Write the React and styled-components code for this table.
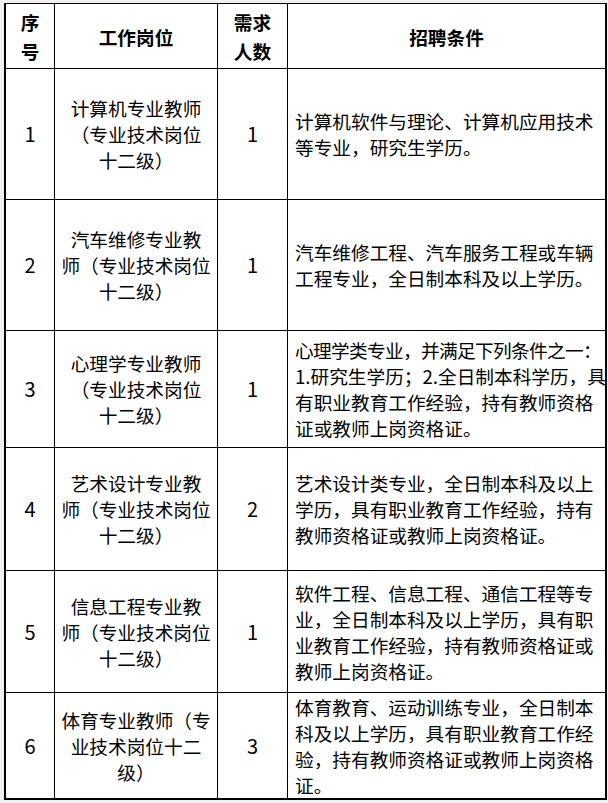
import React from "react";
import styled, { createGlobalStyle } from "styled-components";

const GlobalStyle = createGlobalStyle`
  html, body {
    margin: 0;
    padding: 0;
    background: #f0f0f0;
  }
  body {
    font-family: "Noto Sans CJK SC", "Noto Sans", sans-serif;
    color: #000;
  }
`;

const Page = styled.div`
  padding: 3px 0 0 4px;
  width: 604px;
  height: 800px;
  box-sizing: border-box;
`;

const Table = styled.div`
  display: grid;
  grid-template-columns: 48px 162px 69px 317px;
  grid-template-rows: 64px 130px 130px 116px 122px 121px 105px;
  gap: 1px;
  width: 603px;
  box-sizing: border-box;
  padding: 1px 2px 2px 2px;
  background: #000;
`;

const Cell = styled.div`
  background: #fff;
  display: flex;
  flex-direction: column;
  justify-content: center;
  align-items: ${(p) => (p.$left ? "flex-start" : "center")};
  text-align: ${(p) => (p.$left ? "left" : "center")};
  padding: ${(p) => (p.$left ? "0 0 0 7px" : "0")};
  font-size: 18.67px;
  line-height: 26px;
  white-space: nowrap;
  overflow: hidden;
`;

const HeadCell = styled(Cell)`
  font-weight: bold;
  line-height: 29px;
`;

const Num = styled.span`
  font-size: 20px;
`;

const Line = styled.span`
  letter-spacing: ${(p) => (p.$tight ? "-0.65px" : "0")};
`;

const rows = [
  {
    no: "1",
    post: ["计算机专业教师", "（专业技术岗位", "十二级）"],
    count: "1",
    cond: ["计算机软件与理论、计算机应用技术", "等专业，研究生学历。"],
  },
  {
    no: "2",
    post: ["汽车维修专业教", "师（专业技术岗位", "十二级）"],
    count: "1",
    cond: ["汽车维修工程、汽车服务工程或车辆", "工程专业，全日制本科及以上学历。"],
  },
  {
    no: "3",
    post: ["心理学专业教师", "（专业技术岗位", "十二级）"],
    count: "1",
    cond: [
      "心理学类专业，并满足下列条件之一：",
      "1.研究生学历；2.全日制本科学历，具",
      "有职业教育工作经验，持有教师资格",
      "证或教师上岗资格证。",
    ],
  },
  {
    no: "4",
    post: ["艺术设计专业教", "师（专业技术岗位", "十二级）"],
    count: "2",
    cond: [
      "艺术设计类专业，全日制本科及以上",
      "学历，具有职业教育工作经验，持有",
      "教师资格证或教师上岗资格证。",
    ],
  },
  {
    no: "5",
    post: ["信息工程专业教", "师（专业技术岗位", "十二级）"],
    count: "1",
    cond: [
      "软件工程、信息工程、通信工程等专",
      "业，全日制本科及以上学历，具有职",
      "业教育工作经验，持有教师资格证或",
      "教师上岗资格证。",
    ],
  },
  {
    no: "6",
    post: ["体育专业教师（专", "业技术岗位十二", "级）"],
    count: "3",
    cond: [
      "体育教育、运动训练专业，全日制本",
      "科及以上学历，具有职业教育工作经",
      "验，持有教师资格证或教师上岗资格",
      "证。",
    ],
  },
];

// lines longer than 16 full-width chars need a little squeeze to fit the cell
const Lines = ({ items }) =>
  items.map((t, i) => (
    <Line key={i} $tight={t.length > 16 && !/\d/.test(t)}>
      {t}
    </Line>
  ));

const App = () => {
  return (
    <>
      <GlobalStyle />
      <Page>
        <Table>
          <HeadCell>
            <span>序</span>
            <span>号</span>
          </HeadCell>
          <HeadCell>工作岗位</HeadCell>
          <HeadCell>
            <span>需求</span>
            <span>人数</span>
          </HeadCell>
          <HeadCell>招聘条件</HeadCell>

          {rows.map((r) => (
            <React.Fragment key={r.no}>
              <Cell>
                <Num>{r.no}</Num>
              </Cell>
              <Cell>
                <Lines items={r.post} />
              </Cell>
              <Cell>
                <Num>{r.count}</Num>
              </Cell>
              <Cell $left>
                <Lines items={r.cond} />
              </Cell>
            </React.Fragment>
          ))}
        </Table>
      </Page>
    </>
  );
};

export default App;
